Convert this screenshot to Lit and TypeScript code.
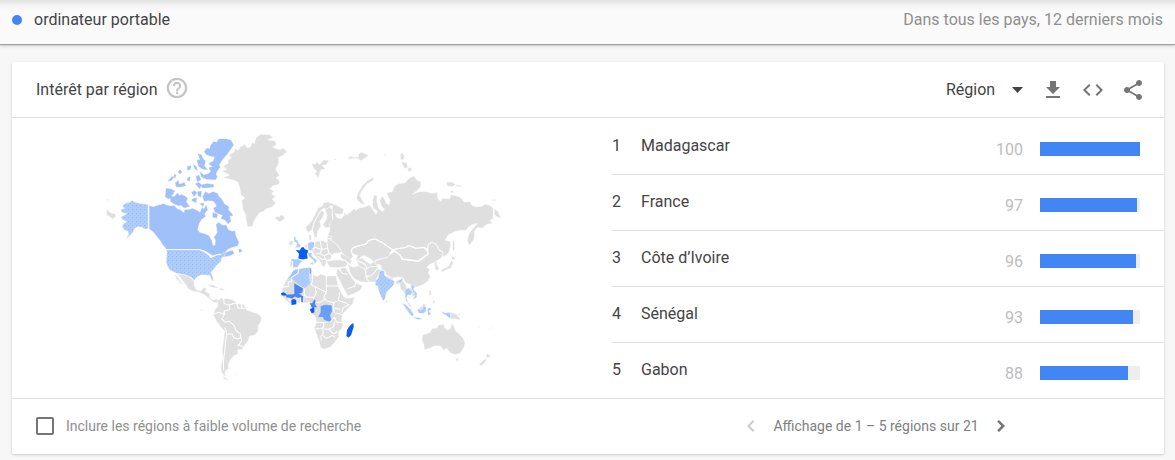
import { LitElement, html, css, svg } from "lit";
import { customElement, property, state } from "lit/decorators.js";

interface Region {
  rank: number;
  name: string;
  value: number;
}

const REGIONS: Region[] = [
  { rank: 1, name: "Madagascar", value: 100 },
  { rank: 2, name: "France", value: 97 },
  { rank: 3, name: "Côte d’Ivoire", value: 96 },
  { rank: 4, name: "Sénégal", value: 93 },
  { rank: 5, name: "Gabon", value: 88 },
];

@customElement("world-map")
export class WorldMap extends LitElement {
  static styles = css`
    :host { display: block; }
    .map { display: block; width: 100%; height: auto; }
    path { stroke-linejoin: round; }
    .none { fill: #dfdfdf; stroke: #fff; stroke-width: 1.5; }
    .low { fill: url(#low-dots); stroke: #fff; stroke-width: 1; }
    .low-base { fill: #b1cefb; }
    .low-dot { fill: #8db6f7; }
    .medium { fill: #a0c0f9; stroke: #a0c0f9; stroke-width: 1; }
    .high { fill: #6a9ef6; stroke: #fff; stroke-width: 1; }
    .strong { fill: #4a86ef; }
    .top { fill: #0b5df0; }
    .border { fill: none; stroke: #fff; stroke-width: 3; }
  `;

  render() {
    return html`<svg class="map" viewBox="0 0 1233 780" role="img" aria-label="Intérêt par région">
      <defs>
        <pattern id="low-dots" width="12" height="12" patternUnits="userSpaceOnUse">
          <rect class="low-base" width="12" height="12" />
          <rect class="low-dot" width="3" height="3" />
          <rect class="low-dot" x="6" y="6" width="3" height="3" />
        </pattern>
      </defs>
      ${this.northAmerica()} ${this.greenland()} ${this.russia()} ${this.southAmerica()}
      ${this.africaAndEurope()} ${this.asiaPacific()}
    </svg>`;
  }

  private northAmerica() {
    return svg`<g>
      <path class="medium" d="M147,242L160,246L172,241L182,239L190,236L198,240L210,243L222,242L232,252L240,254L252,264L254,254L268,254L276,250L286,254L300,262L306,248L312,252L318,240L322,254L312,266L316,274L304,282L296,296L292,312L298,322L312,326L326,332L334,346L338,362L345,360L347,345L342,336L352,322L350,308L348,298L356,292L366,300L378,300L384,314L394,318L404,318L406,330L412,344L416,350L412,362L396,366L382,372L372,384L384,380L396,376L402,384L388,392L372,394L352,398L344,394L330,386L318,378L298,372H200L190,360L180,345L168,330L158,318L147,310Z"/>
      <path class="low" d="M66,243L78,234L88,232L95,226L108,232L122,235L145,238V310L135,312L125,306L112,305L104,310L98,322L88,333L77,341L86,328L84,318L74,315L66,305L70,296L80,290L68,284L62,276L72,270L80,266L66,262L62,253L74,250Z"/>
      <path class="border" d="M146,238V312"/>
      <path class="none" d="M20,250L30,262L45,266L48,273L38,282L28,274L20,270ZM20,222h5v4h-5z"/>
      <path class="medium" d="M338,200L352,205L356,214L364,222L372,236L386,246L384,254L394,264L398,272L388,272L392,288L384,296L374,284L362,280L368,270L356,266L346,262L340,250L350,242L340,228L324,226L312,228L308,214L316,200L326,206Z"/>
      <path class="medium" d="M210,214L224,214L232,204L238,212L244,208L256,214L262,220L258,230L268,244L252,248L242,240L236,242L222,236L212,230ZM198,190L212,192L224,198L216,210L206,222L196,216ZM204,168L214,156L222,154L214,166ZM226,174L234,166L238,178L252,172L256,182L240,186L228,184ZM234,140L240,134L246,142L238,146ZM262,124L272,122L270,134L262,134ZM280,118L288,124L292,136L284,132ZM288,154L296,150L302,164L292,170ZM286,176L296,172L304,180L298,190ZM302,180L320,176L340,178V186L320,188L306,188ZM274,202L284,196L290,204L282,214ZM276,222L290,218L288,232L276,228ZM292,200L304,198L302,216L294,212ZM262,158L270,156L268,168L262,166ZM300,236L312,234L308,244ZM338,262L352,268L350,278L338,276ZM222,148L228,150L224,160ZM416,372L422,372L425,380L417,381Z"/>
      <path class="medium" d="M312,80L320,70L330,72V64L340,50L350,52L356,42L378,42L392,46L400,60L390,74L380,88L366,104L356,120L360,126L348,142L348,160L336,158L326,146L332,138L326,128L338,124L326,116L340,108L344,96L328,92L318,88ZM294,86L304,90L308,100L316,108L312,122L322,134L308,132L296,124L290,106L300,104ZM300,140L310,150L326,146L338,156L352,152L346,164L318,162L304,156Z"/>
    </g>`;
  }

  private greenland() {
    return svg`<g transform="translate(330 0)">
      <path class="none" d="M34,138L50,134L38,124L54,114L52,106L64,98L56,90L72,80L74,70L84,76L90,66L104,58L110,68L120,66L126,52L132,56L136,40L150,28L176,28L190,38L172,44L196,48L198,60L188,66L206,74L220,70L230,80L216,92L204,98L206,110L202,122L196,132L208,152L198,158L208,168L206,178L188,182L178,192L192,198L184,206L196,216L186,222L196,234L186,246L170,250L160,258L150,262L138,276L130,292L128,304L112,305L108,288L106,268L98,254L94,226L104,218L92,210L88,186L82,170L64,164L38,158L58,150Z"/>
      <path class="none" d="M194,280L200,272L206,276L214,269L224,276L218,286L206,290ZM304,114L314,118L318,110L328,118L340,104L356,106L348,120L336,120L344,132L332,134L324,158L314,146L320,138L310,132ZM372,102h6v3h-6zM412,98l12,-4l14,2l10,-2l2,8l-16,-2l-18,3z"/>
      <path class="none" d="M286,306L296,296L302,290L312,272L322,250L336,242L340,234L352,230L368,236L374,244L360,242L350,252L338,250L326,262L318,280L310,294L306,312L296,322L288,316Z"/>
      <path class="none" d="M307,314L312,294L322,272L334,255L342,262L338,276L328,290L332,304L322,318L320,336L312,338ZM344,254L358,246L366,254L365,272L370,292L360,306L344,308L338,298L348,282L350,268ZM296,328L302,328L304,344L296,346Z"/>
    </g>`;
  }

  private russia() {
    return svg`<g transform="translate(720 45)">
      <path class="none" d="M-24,200L-18,192L-2,200L10,208L8,220L-4,224L-16,220L-10,232L2,236L12,226L10,214L18,224L30,216L40,206L48,210L56,204L74,200L86,194L96,206L106,222L112,214L98,204L96,180L102,164L110,168L110,186L114,204L126,214L132,208L122,196L118,180L124,168L132,176L138,190L146,194L149,180L142,170L140,158L156,154L162,138L176,130L194,128L206,114L220,108L230,120L242,126L240,140L230,152L216,162L240,154L256,154L276,160L290,156L292,176L302,184L306,174L328,176L330,164L346,166L360,172L372,186L388,184L394,196L408,200L424,198L436,192L452,198L458,206V236L448,240L456,250L440,252L424,264L410,262L402,274L402,286L400,298L386,316L380,302L384,284L392,270L410,250L396,254L384,260L376,272L360,270L344,274L324,284L314,300L330,304L330,320L326,336L316,346L306,350L308,336L296,330L286,312L274,306L264,312L262,326L250,322L226,324L204,316L196,322L180,324L164,328L154,328L140,318L124,306L102,296L84,302L76,312L50,318L36,324L32,334L38,350L30,358L14,351L4,335L-2,325L-10,313L-22,305L-30,297L-38,287L-32,272L-32,250L-22,236L-24,220Z"/>
      <path class="none" d="M32,334L36,324L50,318L76,312L84,302L102,296L124,306L140,318L156,328L148,340L146,350L130,354L110,358L100,366L90,356L70,346L60,352L54,366L46,360L52,346L40,342ZM164,328L180,324L196,322L204,316L226,324L250,322L260,334L262,340L246,352L232,362L210,358L186,356L178,342L164,334Z"/>
      <path class="border" d="M32,334L36,324L50,318L76,312L84,302L102,296L124,306L140,318L156,328L180,324L196,322L204,316L226,324L250,322L262,326L264,312L274,306L286,312L296,330L308,336"/>
      <path class="none" d="M62,190L50,180L48,172L54,156L66,136L84,120L98,112L100,120L80,132L66,150L58,166L68,184L76,194ZM180,42l6,-4l6,10l-2,12l-10,-2zM182,64l16,4l4,14l-10,4zM202,84l10,-2l2,10l-10,4zM318,126l18,0l8,8l-8,6l-16,-2zM346,134l16,2l2,4l-16,-1zM330,152h8v6h-8zM456,178h10v4h-10zM461,204L472,214L482,236L468,230L461,222ZM336,300l6,4l0,26l-6,4zM26,50l10,-2l6,6l-12,2zM54,42l8,-6l10,4l14,6l-10,6l-14,10l-8,-4zM130,42l8,3l-6,2z"/>
    </g>`;
  }

  private southAmerica() {
    return svg`<g transform="translate(180 345)">
      <path class="low" d="M20,28H118L132,34L146,44L152,52L168,44L182,42L192,36L196,44L184,54L182,64L170,74L160,88L152,96L158,110L160,122L154,120L150,106L138,104L122,104L110,110L102,121L94,112L84,108L74,104L52,100L38,94L28,88L22,78L18,66L20,44Z"/>
      <path class="border" d="M20,28H118L132,34L146,44L152,52L168,44L182,42"/>
      <path class="none" d="M52,101L72,104L84,108L94,114L102,122V138L110,150L122,152L130,142L139,143L136,154L148,160L150,174L160,180L168,175L176,182L170,188L158,186L148,176L134,164L116,156L100,154L84,146L78,134L66,120L58,108ZM42,98L54,112L66,130L64,133L48,114ZM140,136L158,133L174,143L162,143ZM176,145L186,144L195,150L182,151ZM122,208h4v4h-4z"/>
      <path class="none" d="M172,182L184,172L188,178L198,174L216,178L226,184L228,192L240,190L252,194L258,208L272,214L292,220L304,230L302,244L294,256L294,272L284,284L268,288L264,302L252,316L246,328L232,328L234,340L222,346L214,354L208,362L204,374L206,384L196,392L194,402L204,406L192,406L184,396L182,380L188,352L186,330L190,302L193,272L182,260L170,244L160,226L164,208L172,200ZM186,409L198,412L206,419L194,417ZM226,400l6,0l-2,4z"/>
      <path class="border" d="M190,176L192,190L206,194L210,208L192,212L190,222L176,216L162,220M206,194L226,188M230,192L234,204L256,204M242,192L246,204M192,212L194,222L184,236L196,246L206,242L222,256L228,272L240,280L242,290L234,296L220,292L216,280L200,282L196,266L192,262M200,282L196,302L194,330L190,360L190,390M242,290L244,302L232,318M234,312L248,320"/>
    </g>`;
  }

  private africaAndEurope() {
    return svg`<g transform="translate(510 300)">
      <path class="none" d="M72,134L84,130L100,128L118,126L124,140L126,148L140,154L150,146L168,152L186,152L198,152L200,166L204,184L212,200L222,216L228,220L252,216L248,234L228,254L216,268L214,284L218,296L216,308L204,320L206,334L192,352L180,366L160,372L150,366L146,346L138,326L132,308L138,292L136,276L124,264L118,254L122,240L116,230L100,234L84,232L66,240L54,232L42,220L34,208L36,190L44,172L54,156Z"/>
      <path class="border" d="M36,186L54,184V170L64,168V158M126,148V168L122,178L134,184L166,200M168,152V182H204M168,182V200L160,216L170,228L190,232L204,226L208,202M134,184L138,202L130,218L136,232L152,230L166,220M102,190V206L108,216L130,216M102,206L98,230M190,232L188,248L192,262L216,268M204,226L222,232L236,238L218,248L214,262M188,248L210,252M136,290L160,292V304L154,310H134M160,292L182,288L192,276L198,290L216,292M154,310L176,312L190,304L192,290M152,346V332L158,326V312M158,330L168,340L186,330L194,336M176,312L190,326L202,318M50,206L60,230M80,220L80,232M90,218L90,232"/>
      <path class="low" d="M62,158L84,142L84,132L100,128L118,127L117,150L121,174L104,190L94,186L72,168Z"/>
      <path class="medium" d="M54,160L62,150L70,136L84,133L84,142L66,156Z"/>
      <path class="border" d="M62,158L84,143V132"/>
      <path class="high" d="M117,127L123,130L123,144L118,148Z"/>
      <path class="strong" d="M72,174L98,190L96,202L84,206L92,208L96,214L84,218L74,214L66,220L48,216L46,208L62,208L72,206ZM92,212L99,212L98,230H93ZM118,234L126,234L132,222L136,226L134,236L140,246H124Z"/>
      <path class="high" d="M142,276L150,262L150,242L164,238L185,240L186,258L180,270L184,284L176,290L160,284L158,276Z"/>
      <path class="top" d="M32,204L40,201L48,206L48,211L34,211ZM63,224L70,221L78,224V237L64,239ZM118,252L124,250L126,246H132V262L124,264ZM244,296L249,293L250,304L242,330L234,337L228,332L230,314L236,304ZM76,74L88,76L94,66L100,66L104,72L114,76L110,88L112,100L98,103L84,100L86,86Z"/>
      <path class="low" d="M62,101L84,102L97,107L88,116L82,126L68,127L68,108L62,108ZM70,38L76,34L76,42L82,46L84,54L92,60L88,66L74,68L80,60L78,52L72,50ZM112,56L120,50L132,50L133,64L126,70L130,76L114,75ZM111,84L125,82L124,92L140,106L134,116L130,106L116,94ZM119,113h10v5h-8z"/>
      <path class="none" d="M60,108L67,109L66,126L59,125ZM56,52L64,46L70,50L66,60L57,60ZM101,62L110,56L111,70ZM134,50L154,46L170,52L172,32L184,34L182,46L200,58L214,80L206,84L190,84L184,92L180,104L168,104L166,118L162,126L154,120L148,106L130,86L126,78L134,66ZM168,108L196,104L224,106L232,116L226,124L200,128L178,126ZM200,132L224,126L234,140L246,160L258,174L278,182L268,196L248,206L232,212L220,190L206,162L198,146ZM210,84L228,92L244,106L240,118L228,108L212,98Z"/>
      <path class="none" d="M232,116L246,126L264,122L284,132L288,160L296,172L272,170L250,160L238,140ZM260,104L276,98L286,108L300,116L312,108L324,112L318,124L300,124L284,132L264,122ZM286,132L300,124L324,124L312,142L300,152L288,152ZM288,156L302,152L314,140L320,130L332,136L324,152L318,160L320,170L296,170Z"/>
      <path class="border" d="M134,66L152,72L172,70L170,52M150,48L154,72L150,86L136,86M172,70L176,84L162,92L150,86M162,92L166,104M142,92L156,104L166,100M172,40L184,42M174,82L186,92M204,128L216,144L232,148M232,190L252,184L256,174M262,106L284,118L290,130"/>
    </g>`;
  }

  private asiaPacific() {
    return svg`<g transform="translate(780 345)">
      <path class="none" d="M102,34L118,44L126,58L150,60L174,64L188,54L204,42L202,26L204,12L214,6L226,12L236,30L248,38L244,52L232,60L220,68L208,72L198,82L208,86L204,98L210,108L204,120L190,132L170,140L156,136L146,132L134,126L128,112L112,110L96,114L78,104L74,94L64,88L60,74L44,72L46,62L62,56L80,52L90,42Z"/>
      <path class="border" d="M104,34L118,44L126,58L150,60L174,64L188,54L203,42"/>
      <path class="none" d="M222,66L230,64L228,72L236,84L230,92L224,86ZM242,88L256,82L266,76L272,60L278,66L272,84L258,88L246,96ZM272,48L280,50L286,54L276,60ZM74,178l8,6l-4,6zM80,106L98,114L96,120L80,112ZM104,122l10,0l4,12l-8,-2zM118,132L126,118L132,128L140,144L134,150L134,166L126,150L120,146ZM146,142L156,146L166,162L160,170L152,166L156,158ZM140,186l8,4l6,12l-8,-4zM170,206L180,202L190,190L198,196L184,208ZM205,150l6,0l2,14l-6,2zM212,168l8,6l-2,4zM218,180l6,2l0,8l-8,-4zM271,216L288,222L302,240L284,236L271,236ZM290,222l10,-4l-4,8zM354,258l4,0l0,3l-4,0zM386,264l8,-4l-2,5z"/>
      <path class="low" d="M56,98L60,90L72,92L72,104L80,112L102,122L100,134L90,144L78,156L74,176L68,182L60,166L54,148L52,138L44,134L46,122L54,112ZM108,122L116,120L130,112L120,130ZM134,148L144,143L156,154L152,164L142,164L138,174L144,188L136,182L134,166ZM150,136L160,134L164,140L158,146L170,160L168,172L156,178L164,166L156,152Z"/>
      <path class="low" d="M126,190L134,192L150,208L160,222L156,230L144,216ZM156,230L176,232L188,236L172,238ZM170,206L184,208L190,198L198,200L196,214L188,220L174,218ZM201,206L206,202L214,206L206,212L212,222L203,226ZM242,212L254,218L270,216V236L258,226L246,220Z"/>
      <path class="none" d="M186,284L198,280L208,276L216,264L228,264L234,254L250,252L252,262L262,270L270,264L274,246L280,258L286,272L298,282L308,294L314,306L310,322L300,338L284,343L270,338L258,324L248,330L240,318L224,316L208,324L192,328L190,312L184,298ZM284,354H295L290,364ZM380,338L384,344L392,342L384,352L376,352ZM354,374L368,360L374,355L378,360L364,376Z"/>
    </g>`;
  }
}

@customElement("region-table")
export class RegionTable extends LitElement {
  @property({ attribute: false }) regions: Region[] = [];

  static styles = css`
    :host { display: block; }
    .table { width: 100%; border-spacing: 0; table-layout: fixed; color: #444; }
    .rank-col { width: 29px; }
    .value-col { width: 80px; }
    .bar-col { width: 141px; }
    .cell {
      box-sizing: border-box;
      height: 56px;
      padding: 17px 0 0;
      border-top: 1px solid #e0e0e0;
      font-weight: 400;
      line-height: 20px;
      text-align: left;
      vertical-align: top;
    }
    .row:first-child .cell { border-top-color: transparent; }
    .cell.value { padding-top: 21px; text-align: right; color: #bdbdbd; }
    .cell.meter { padding: 23px 24px 0 17px; }
    .track { height: 14px; background: #eee; }
    .fill { height: 100%; background: #4285f4; }
  `;

  render() {
    return html`<table class="table">
      <colgroup><col class="rank-col" /><col /><col class="value-col" /><col class="bar-col" /></colgroup>
      <tbody>
        ${this.regions.map(
          (r) => html`<tr class="row">
            <td class="cell">${r.rank}</td>
            <th class="cell" scope="row">${r.name}</th>
            <td class="cell value">${r.value}</td>
            <td class="cell meter"><div class="track"><div class="fill" style="width:${r.value}%"></div></div></td>
          </tr>`
        )}
      </tbody>
    </table>`;
  }
}

@customElement("app-root")
export class AppRoot extends LitElement {
  @state() private includeLow = false;

  static styles = css`
    :host {
      display: block;
      min-height: 100vh;
      background: #f7f7f7;
      color: #444;
      font: 400 16px/20px Roboto, sans-serif;
    }
    .topbar {
      display: flex;
      align-items: center;
      justify-content: space-between;
      box-sizing: border-box;
      height: 44px;
      padding: 0 12px 4px;
      background: linear-gradient(#e0e0e0, #f4f4f4 5px, #fafafa 12px);
      box-shadow: 0 1px 1px #a0a0a0, 0 2px 3px #d0d0d0;
    }
    .term { display: flex; align-items: center; gap: 12px; }
    .dot { width: 10px; height: 10px; border-radius: 50%; background: #4285f4; }
    .scope { color: #8f8f8f; }
    .card {
      margin: 18px 11px 0 12px;
      border-radius: 2px;
      background: #fff;
      box-shadow: 0 1px 3px #ccc;
    }
    .head {
      display: flex;
      align-items: center;
      justify-content: space-between;
      box-sizing: border-box;
      height: 56px;
      padding: 0 11px 0 24px;
      border-bottom: 1px solid #e0e0e0;
    }
    .title { display: flex; align-items: center; gap: 7px; }
    .heading { margin: 0; font: inherit; }
    .actions { display: flex; align-items: center; }
    .picker { display: grid; align-items: center; width: 87px; }
    .select {
      grid-area: 1 / 1;
      width: 100%;
      padding: 0;
      border: 0;
      appearance: none;
      background: none;
      color: #444;
      font: inherit;
    }
    .caret { grid-area: 1 / 1; justify-self: end; margin-right: 10px; pointer-events: none; }
    .icon { display: block; fill: currentColor; }
    .button {
      display: grid;
      place-items: center;
      width: 40px;
      height: 40px;
      padding: 0;
      border: 0;
      background: none;
      color: #757575;
      cursor: pointer;
    }
    .button.help, .button.step { width: 24px; height: 24px; }
    .button.help { margin-bottom: 4px; color: #c6c6c6; }
    .button:disabled { color: #ccc; cursor: default; }
    .body { display: grid; grid-template-columns: 588fr 12px 552fr; }
    .map-area { padding: 7px 15% 0; }
    .list { grid-column: 3; }
    .foot {
      display: grid;
      grid-template-columns: 588fr 12px 552fr;
      align-items: center;
      box-sizing: border-box;
      height: 56px;
      padding-bottom: 2px;
      border-top: 1px solid #e0e0e0;
      color: #8f8f8f;
      font-size: 14px;
    }
    .option { display: flex; align-items: center; gap: 12px; padding-left: 24px; }
    .check {
      box-sizing: border-box;
      width: 18px;
      height: 18px;
      margin: 0;
      border: 2px solid #757575;
      border-radius: 2px;
      appearance: none;
    }
    .check:checked { background: #757575; }
    .pager { grid-column: 3; display: flex; justify-content: center; align-items: center; gap: 10px; padding-right: 24px; color: #808080; }
  `;

  private icon(d: string) {
    return html`<svg class="icon" width="24" height="24" viewBox="0 0 24 24" aria-hidden="true"><path d=${d} /></svg>`;
  }

  render() {
    return html`
      <header class="topbar">
        <div class="term"><span class="dot"></span><span>ordinateur portable</span></div>
        <span class="scope">Dans tous les pays, 12 derniers mois</span>
      </header>
      <section class="card">
        <div class="head">
          <div class="title">
            <h2 class="heading">Intérêt par région</h2>
            <button class="button help" aria-label="Aide">
              ${this.icon("M11 18.200h2.200v-2.200h-2.200zM12 1.700C6.300 1.700 1.700 6.300 1.700 12s4.600 10.300 10.300 10.300 10.300-4.600 10.300-10.300S17.700 1.700 12 1.700zm0 18.200c-4.350 0-7.900-3.550-7.900-7.900s3.550-7.900 7.900-7.900 7.900 3.550 7.900 7.900-3.550 7.900-7.900 7.900zm0-14.100c-2.300 0-4.200 1.900-4.200 4.200h2.300c0-1.050.85-1.900 1.900-1.900s1.900.85 1.900 1.900c0 1.900-3 1.750-3 5.200h2.200c0-2.250 3.100-2.600 3.100-5.200 0-2.300-1.900-4.200-4.200-4.200z")}
            </button>
          </div>
          <div class="actions">
            <div class="picker">
              <select class="select" aria-label="Niveau géographique"><option>Région</option></select>
              <svg class="icon caret" width="11" height="6" viewBox="0 0 11 6" aria-hidden="true"><path d="M0 0h11L5.500 6z" /></svg>
            </div>
            <button class="button" aria-label="Télécharger">${this.icon("M19 9h-4V3H9v6H5l7 7 7-7zM5 18v2h14v-2H5z")}</button>
            <button class="button" aria-label="Intégrer">${this.icon("M9.400 16.600L4.800 12l4.600-4.600L8 6l-6 6 6 6 1.400-1.400zm5.200 0l4.600-4.600-4.600-4.600L16 6l6 6-6 6-1.400-1.400z")}</button>
            <button class="button" aria-label="Partager">
              ${this.icon("M18 16.080c-.76 0-1.440.3-1.960.77L8.910 12.700c.05-.23.09-.46.09-.7s-.04-.47-.09-.7l7.050-4.110c.54.5 1.250.81 2.040.81 1.660 0 3-1.340 3-3s-1.340-3-3-3-3 1.340-3 3c0 .24.04.47.09.7L8.040 9.810C7.500 9.310 6.790 9 6 9c-1.660 0-3 1.340-3 3s1.340 3 3 3c.79 0 1.500-.31 2.040-.81l7.120 4.160c-.05.21-.08.43-.08.65 0 1.610 1.310 2.920 2.920 2.920s2.920-1.310 2.920-2.920-1.310-2.920-2.920-2.920z")}
            </button>
          </div>
        </div>
        <div class="body">
          <div class="map-area"><world-map></world-map></div>
          <region-table class="list" .regions=${REGIONS}></region-table>
        </div>
        <div class="foot">
          <label class="option">
            <input
              class="check"
              type="checkbox"
              .checked=${this.includeLow}
              @change=${(e: Event) => (this.includeLow = (e.target as HTMLInputElement).checked)}
            />
            <span>Inclure les régions à faible volume de recherche</span>
          </label>
          <nav class="pager" aria-label="Pagination">
            <button class="button step" aria-label="Précédent" disabled>${this.icon("M15.410 7.410L14 6l-6 6 6 6 1.410-1.410L10.830 12z")}</button>
            <span>Affichage de 1 – 5 régions sur 21</span>
            <button class="button step" aria-label="Suivant">${this.icon("M10 6L8.200 7.800 12.400 12l-4.200 4.200L10 18l6-6z")}</button>
          </nav>
        </div>
      </section>
    `;
  }
}
